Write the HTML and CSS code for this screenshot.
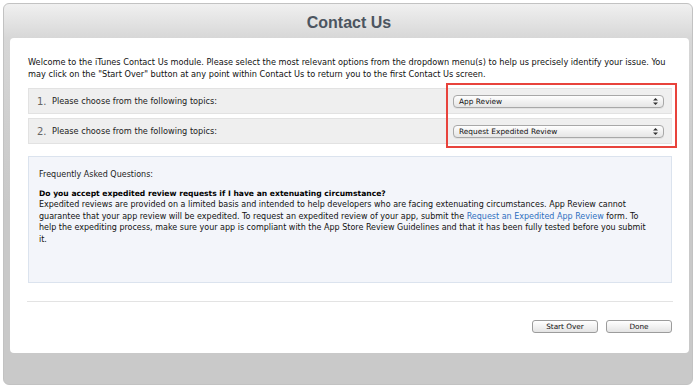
FILE: index.html
```html
<!DOCTYPE html>
<html>
<head>
<meta charset="utf-8">
<link rel="stylesheet" href="styles.css">
</head>
<body>
<div class="window">
  <div class="header"><h1 class="title">Contact Us</h1></div>
  <div class="panel">
    <p class="intro">Welcome to the iTunes Contact Us module. Please select the most relevant options from the dropdown menu(s) to help us precisely identify your issue. You may click on the "Start Over" button at any point within Contact Us to return you to the first Contact Us screen.</p>
    <div class="rows">
      <div class="row">
        <span class="num">1.</span>
        <span class="label">Please choose from the following topics:</span>
        <div class="select"><span>App Review</span>
          <svg class="arrows" width="5" height="7" viewBox="0 0 5 7"><path d="M2.5 0 L5 2.6 L0 2.6 Z M2.5 7 L5 4.4 L0 4.4 Z" fill="#333"/></svg>
        </div>
      </div>
      <div class="row">
        <span class="num">2.</span>
        <span class="label">Please choose from the following topics:</span>
        <div class="select"><span>Request Expedited Review</span>
          <svg class="arrows" width="5" height="7" viewBox="0 0 5 7"><path d="M2.5 0 L5 2.6 L0 2.6 Z M2.5 7 L5 4.4 L0 4.4 Z" fill="#333"/></svg>
        </div>
      </div>
    </div>
    <div class="faq">
      <p class="faq-title">Frequently Asked Questions:</p>
      <p class="faq-q">Do you accept expedited review requests if I have an extenuating circumstance?</p>
      <p class="faq-a">Expedited reviews are provided on a limited basis and intended to help developers who are facing extenuating circumstances. App Review cannot guarantee that your app review will be expedited. To request an expedited review of your app, submit the <a class="link" href="#">Request an Expedited App Review</a> form. To help the expediting process, make sure your app is compliant with the App Store Review Guidelines and that it has been fully tested before you submit it.</p>
    </div>
    <div class="divider"></div>
    <div class="actions">
      <button class="btn">Start Over</button>
      <button class="btn">Done</button>
    </div>
  </div>
</div>
<div class="highlight"></div>
</body>
</html>
```
FILE: styles.css
```css
html, body {
  margin: 0;
  padding: 0;
  background: #ffffff;
}
body {
  width: 700px;
  height: 389px;
  overflow: hidden;
  position: relative;
  font-family: "DejaVu Sans", Verdana, sans-serif;
  font-size: 8.2px;
  color: #111;
}
.window {
  margin: 3px 0 0 3px;
  width: 688px;
  height: 380px;
  border: 1px solid #c2c2c2;
  border-radius: 6px;
  background: linear-gradient(#f0f0f0 0, #d7d7d7 34px, #cfcfcf 120px, #c9c9c9 200px, #c9c9c9 100%);
  display: flex;
  flex-direction: column;
}
.header {
  height: 34px;
  display: flex;
  align-items: center;
  justify-content: center;
}
.title {
  margin: 0;
  font-family: "Liberation Sans", Arial, sans-serif;
  font-weight: bold;
  font-size: 16px;
  color: #4c5560;
  padding-top: 3px;
  padding-left: 2px;
}
.panel {
  margin: 0 3px 0 6px;
  height: 315px;
  background: #ffffff;
  border-radius: 4px;
  box-sizing: border-box;
  padding: 19px 17px 0 18px;
  display: flex;
  flex-direction: column;
}
.intro {
  margin: 0;
  line-height: 11.5px;
  color: #111;
}
.rows {
  margin-top: 8px;
  display: flex;
  flex-direction: column;
  gap: 4px;
}
.row {
  height: 26px;
  box-sizing: border-box;
  background: #efefef;
  border: 1px solid #e2e2e2;
  border-right-color: #e8e8e8;
  display: flex;
  align-items: center;
  padding: 0 7px 0 8px;
}
.num {
  font-size: 10px;
  color: #666;
  width: 15px;
}
.label {
  flex: 1;
  color: #222;
}
.select {
  width: 211px;
  height: 13px;
  box-sizing: border-box;
  border: 1px solid #a8a8a8;
  border-radius: 4px;
  background: linear-gradient(#ffffff, #f1f1f1 50%, #e6e6e6);
  display: flex;
  align-items: center;
  justify-content: space-between;
  padding: 0 5px 0 5px;
  color: #111;
  font-size: 7.4px;
  box-shadow: 0 1px 0 rgba(0,0,0,0.05);
}
.arrows {
  display: block;
}
.faq {
  margin-top: 12px;
  height: 127px;
  box-sizing: border-box;
  background: #f3f5fa;
  border: 1px solid #dbe3ee;
  padding: 12px 15px 0 10px;
  font-size: 8px;
}
.faq p {
  margin: 0;
  line-height: 11.5px;
}
.faq-title {
  color: #222;
}
.faq-q {
  margin-top: 7px !important;
  font-weight: bold;
  font-size: 7.6px;
  color: #000;
}
.faq-a {
  color: #111;
}
.link {
  color: #2f6fc0;
  text-decoration: none;
}
.divider {
  margin-top: 18px;
  height: 1px;
  background: #e3e3e3;
  margin-left: -1px;
  margin-right: -1px;
}
.actions {
  margin-top: 18px;
  display: flex;
  justify-content: flex-end;
  gap: 8px;
}
.btn {
  width: 66px;
  height: 13px;
  padding: 0;
  box-sizing: border-box;
  border: 1px solid #9c9c9c;
  border-radius: 3px;
  background: linear-gradient(#ffffff, #f2f2f2 50%, #e4e4e4);
  font-family: "DejaVu Sans", Verdana, sans-serif;
  font-size: 7.3px;
  color: #111;
  line-height: 11px;
}
.highlight {
  position: absolute;
  left: 446px;
  top: 83px;
  width: 231px;
  height: 65px;
  box-sizing: border-box;
  border: 2px solid #e8433c;
}
```
